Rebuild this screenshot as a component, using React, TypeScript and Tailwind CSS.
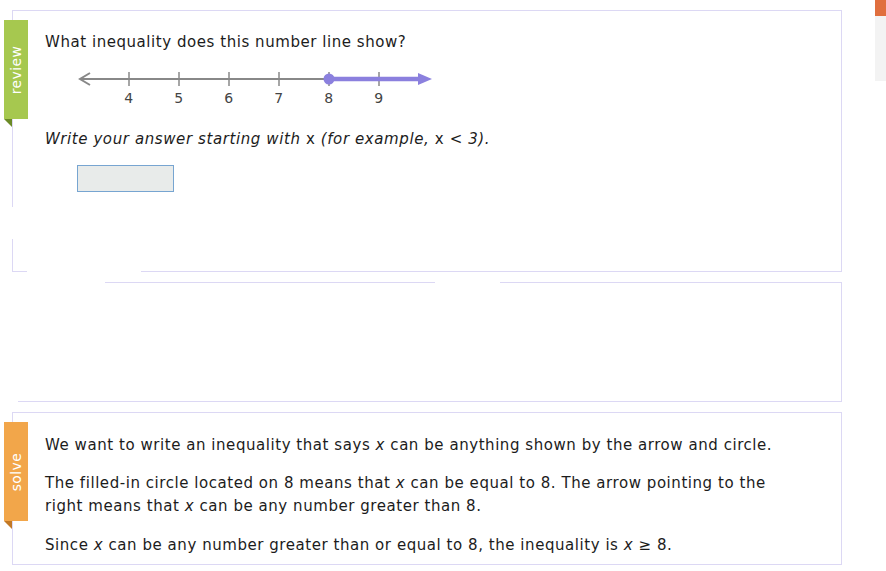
import React from 'react';

function Tab({ label, color, fold }: { label: string; color: string; fold: string }) {
  return (
    <div className="absolute left-[-9px] top-[9px]">
      <div className={`flex h-[99px] w-[24px] items-center justify-center ${color}`}>
        <span className="-rotate-90 whitespace-nowrap text-[14px] leading-none tracking-[0.4px] text-white">{label}</span>
      </div>
      <svg width="9" height="8" className="block">
        <polygon points="0,0 8,0 8,8" className={fold} />
      </svg>
    </div>
  );
}

function NumberLine() {
  const ticks = [4, 5, 6, 7, 8, 9];
  return (
    <svg width="370" height="42" className="block">
      {/* gray axis */}
      <line x1="2" y1="11" x2="252" y2="11" stroke="#888" strokeWidth="2" />
      <polyline points="12,5 2,11 12,17" fill="none" stroke="#888" strokeWidth="2" />
      {ticks.map((t, i) => {
        const x = 51 + i * 50;
        return (
          <g key={t}>
            <line x1={x} y1="4" x2={x} y2="18" stroke="#888" strokeWidth="1.5" />
            <text x={x} y="35" textAnchor="middle" fontSize="14" fill="#444" fontFamily="DejaVu Sans, sans-serif">
              {t}
            </text>
          </g>
        );
      })}
      {/* solution ray */}
      <line x1="251" y1="11" x2="342" y2="11" stroke="#8b80de" strokeWidth="4.5" />
      <polygon points="340,5 354,11 340,17" fill="#8b80de" />
      <circle cx="251" cy="11" r="5.5" fill="#8b80de" />
    </svg>
  );
}

export default function App() {
  return (
    <div className="flex min-h-[571px] justify-between bg-white pl-[12px] font-['DejaVu_Sans',sans-serif] text-[15px] tracking-[0.55px] text-[#1c1c1c]">
      <div className="flex w-[830px] flex-col gap-[10px] pt-[10px]">
        {/* Review card */}
        <div className="relative h-[262px] border border-[#dcd8f4] pl-[32px] pt-[20px]">
          <Tab label="review" color="bg-[#a6c84f]" fold="fill-[#6b8a26]" />
          <div className="absolute left-[-1px] top-[196px] h-[32px] w-[2px] bg-white" />
          <div className="absolute bottom-[-1px] left-[14px] h-[1px] w-[114px] bg-white" />
          <p className="leading-[23px]">What inequality does this number line show?</p>
          <div className="ml-[33px] mt-[14px]">
            <NumberLine />
          </div>
          <p className="mt-[18px] italic leading-[23px] tracking-[0.6px]">
            Write your answer starting with <span className="not-italic">x</span> (for example,{' '}
            <span className="not-italic">x &lt; </span>3).
          </p>
          <div className="ml-[32px] mt-[14px] h-[27px] w-[97px] border border-[#77a5d1] bg-[#e8ebea]" />
        </div>

        {/* Empty card */}
        <div className="relative ml-[6px] h-[120px] border-b border-r border-t border-[#dcd8f4]">
          <div className="absolute left-0 top-[-1px] h-[1px] w-[87px] bg-white" />
          <div className="absolute left-[417px] top-[-1px] h-[1px] w-[65px] bg-white" />
        </div>

        {/* Solve card */}
        <div className="relative h-[153px] border border-[#dcd8f4] pl-[32px] pt-[21px]">
          <Tab label="solve" color="bg-[#f2a64a]" fold="fill-[#c27825]" />
          <p className="leading-[23px]">
            We want to write an inequality that says <i>x</i> can be anything shown by the arrow and circle.
          </p>
          <p className="mt-[15px] leading-[23px]">
            The filled-in circle located on 8 means that <i>x</i> can be equal to 8. The arrow pointing to the
            <br />
            right means that <i>x</i> can be any number greater than 8.
          </p>
          <p className="mt-[16px] leading-[23px]">
            Since <i>x</i> can be any number greater than or equal to 8, the inequality is <i>x</i> ≥ 8.
          </p>
        </div>
      </div>

      {/* right-edge scroll marker */}
      <div className="flex h-[81px] w-[11px] flex-col bg-[#f3f3f3]">
        <div className="h-[16px] bg-[#e06f3e]" />
      </div>
    </div>
  );
}
